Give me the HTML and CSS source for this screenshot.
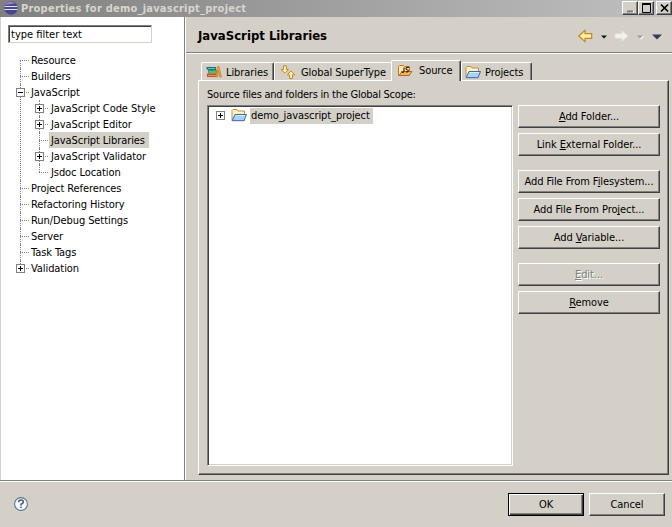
FILE: index.html
```html
<!DOCTYPE html>
<html lang="en">
<head>
<meta charset="utf-8">
<title>Properties for demo_javascript_project</title>
<link rel="stylesheet" href="styles.css">
</head>
<body>
<div class="dialog">
  <header class="titlebar">
    <svg class="logo" width="14" height="14" viewBox="0 0 14 14"><circle cx="7" cy="7" r="6.7" fill="#49458f"/><path d="M1 4Q3 .6 7 .4L11.500 2.500Z" fill="#8d89bd"/><path d="M.7 5.500h12.600M.5 8.500h13" stroke="#e5e3f3" stroke-width="1"/></svg>
    <h1 class="caption">Properties for demo_javascript_project</h1>
    <div class="controls">
      <span class="control"><svg width="13" height="11"><path d="M4 9h6" stroke="#fff" stroke-width="2"/><path d="M3 8.5h6" stroke="#777" stroke-width="2"/></svg></span>
      <span class="control"><svg width="13" height="11"><path d="M2.500 1v8.500h8V1" fill="none" stroke="#000"/><path d="M2 1h9" stroke="#000" stroke-width="2"/></svg></span>
      <span class="control close"><svg width="13" height="11"><path d="M3 1.500l7 7M10 1.500l-7 7" stroke="#000" stroke-width="1.700"/></svg></span>
    </div>
  </header>
  <div class="main">
    <nav class="side">
      <div class="filter">type filter text</div>
      <ul class="tree">
        <li><span class="label">Resource</span></li>
        <li><span class="label">Builders</span></li>
        <li><i class="box minus"></i><span class="label">JavaScript</span>
          <ul>
            <li><i class="box plus"></i><span class="label">JavaScript Code Style</span></li>
            <li><i class="box plus"></i><span class="label">JavaScript Editor</span></li>
            <li><span class="label selected">JavaScript Libraries</span></li>
            <li><i class="box plus"></i><span class="label">JavaScript Validator</span></li>
            <li><span class="label">Jsdoc Location</span></li>
          </ul>
        </li>
        <li><span class="label">Project References</span></li>
        <li><span class="label">Refactoring History</span></li>
        <li><span class="label">Run/Debug Settings</span></li>
        <li><span class="label">Server</span></li>
        <li><span class="label">Task Tags</span></li>
        <li><i class="box plus"></i><span class="label">Validation</span></li>
      </ul>
    </nav>
    <section class="page">
      <div class="heading">
        <h2>JavaScript Libraries</h2>
        <svg class="history" width="86" height="16" viewBox="0 0 86 16">
          <path d="M1.800 8L8 2.300v3.400h6.700v4.600H8v3.400Z" fill="#fff0a8" stroke="#c08a20" stroke-width="1.200"/>
          <path d="M24 7.500h6l-3 3Z" fill="#111"/>
          <path d="M51 8l-6-5.200v3H38v4.400h7v3Z" fill="#f3f2ec" stroke="#e3e0d7"/>
          <path d="M61 8h6l-3 3.500Z" fill="#fff"/><path d="M60 7.500h6l-3 3Z" fill="#9b9994"/>
          <path d="M75 6.500h10l-5 5Z" fill="#383b50"/>
        </svg>
      </div>
      <div class="tabs">
        <div class="tab libraries">
          <svg width="16" height="16" viewBox="0 0 16 16"><path d="M0 2.500L2 2h8v3H1.500Z" fill="#087a83"/><path d="M2 5h9v3.500H2Z" fill="#3a9f62"/><path d="M1 8.500h10.500V12H1Z" fill="#c84f24"/><path d="M2 3.500h7M3 7h7M2 10.500h8" stroke="#a9d9b5" stroke-width=".7"/><path d="M9.500 12L11.500 1.500h1.500L15.500 12h-2L12 6l-1 6Z" fill="#e8a52c" stroke="#b66c10" stroke-width=".5"/></svg>
          <span>Libraries</span></div>
        <div class="tab global">
          <svg width="16" height="16" viewBox="0 0 16 16"><path d="M3.500.8h3v3.700h2L5 8.300 1.200 4.500h2.300Z" fill="#fff0ae" stroke="#c08b2d"/><path d="M9.500 13.500h3v-3.700h2.300L11 5.800 7.300 9.800h2.200Z" fill="#fff0ae" stroke="#c08b2d"/></svg>
          <span>Global SuperType</span></div>
        <div class="tab source active">
          <svg width="16" height="16" viewBox="0 0 16 16"><path d="M1.500 12.500V3.500l1-1h4l1 1h5v9Z" fill="#ffe9a5" stroke="#bd7625"/><path d="M2 12.500l3-4h10l-3 4Z" fill="#f5b35d" stroke="#b76a22"/><path d="M7 4.500v4q-1 2-2.500 0M12 4.500q-3-.5-3 1t2 1.500q1 2-2 2" fill="none" stroke="#332018" stroke-width="1.200"/></svg>
          <span>Source</span></div>
        <div class="tab projects">
          <svg width="16" height="16" viewBox="0 0 16 16"><use href="#folder"/></svg>
          <span>Projects</span></div>
      </div>
      <div class="panel">
        <p class="hint">Source files and folders in the Global Scope:</p>
        <div class="content">
          <div class="list">
            <i class="box plus"></i>
            <svg width="16" height="16" viewBox="0 0 16 16"><g id="folder"><path d="M1 12.500V2.500l1-1h4l1 1.500h6.500v9.500Z" fill="#fff1c0" stroke="#bd9148"/><path d="M1.200 12.700L4 6.500h11.500l-2.500 6.200Z" fill="#a9d2fa" stroke="#3a6ba8"/><path d="M4.800 7.500h9" stroke="#dceeff"/></g></svg>
            <span class="item">demo_javascript_project</span>
          </div>
          <div class="actions">
            <button><span><u>A</u>dd Folder...</span></button>
            <button class="gap"><span>Link <u>E</u>xternal Folder...</span></button>
            <button><span>Add File From F<u>i</u>lesystem...</span></button>
            <button><span>Add File From Pro<u>j</u>ect...</span></button>
            <button class="gap"><span>Add <u>V</u>ariable...</span></button>
            <button disabled><span><u>E</u>dit...</span></button>
            <button><span><u>R</u>emove</span></button>
          </div>
        </div>
      </div>
    </section>
  </div>
  <footer class="footer">
    <svg class="help" width="16" height="16" viewBox="0 0 16 16"><circle cx="8" cy="8" r="6.400" fill="#f7fafc" stroke="#5e7391" stroke-width="1.100"/><path d="M5.700 6.300q0-2.200 2.300-2.200t2.300 1.900Q10.300 7.300 8 8.200v1.300M8 10.500v1.500" fill="none" stroke="#3f5878" stroke-width="1.500"/></svg>
    <button class="ok"><span>OK</span></button>
    <button class="cancel"><span>Cancel</span></button>
  </footer>
</div>
</body>
</html>
```
FILE: styles.css
```css
* { box-sizing: border-box; }
body {
  margin: 0;
  background: #d4d0c8;
  color: #000;
  font: 11px/16px "DejaVu Sans Condensed", "DejaVu Sans", sans-serif;
  font-stretch: condensed;
  letter-spacing: -0.08px;
}
ul, p, h1, h2 { margin: 0; padding: 0; }
svg { display: block; flex: none; }
.dialog { width: 672px; height: 527px; display: flex; flex-direction: column; overflow: hidden; }
.titlebar {
  height: 17px;
  flex: none;
  display: flex;
  align-items: center;
  padding: 0 0 1px 4px;
  background: linear-gradient(90deg, #808080, #c0c0c0);
}
.caption { margin-left: 3px; flex: 1; color: #d8d5ce; font-size: 11px; line-height: 15px; letter-spacing: 0.23px; white-space: nowrap; }
.controls { display: flex; }
.control {
  width: 16px;
  height: 14px;
  padding: 1px;
  background: #d4d0c8;
  border: 1px solid;
  border-color: #fff #404040 #404040 #fff;
  box-shadow: inset -1px -1px #808080;
}
.close { margin-left: 2px; }
.main { height: 465px; flex: none; display: flex; border-bottom: 1px solid #fff; box-shadow: inset 0 -1px #808080; padding-bottom: 1px; }
.side { width: 186px; flex: none; background: #fff; border-left: 1px solid #d4d0c8; border-right: 1px solid #fff; box-shadow: inset -1px 0 #808080; padding: 8px 0 0 7px; }
.filter {
  width: 144px;
  height: 18px;
  padding: 1px 0 0 2px;
  border: 1px solid;
  border-color: #808080 #d4d0c8 #d4d0c8 #808080;
  box-shadow: inset 1px 1px #404040;
  line-height: 16px;
  letter-spacing: 0;
}
.tree { margin: 9px 0 0 12px; list-style: none; }
.tree ul { margin-left: 19px; list-style: none; }
.tree li { position: relative; white-space: nowrap; }
.tree li::before { content: ""; position: absolute; left: 0; top: 0; bottom: 0; border-left: 1px dotted #808080; }
.tree li:last-child::before { bottom: auto; height: 8px; }
.tree > li:first-child::before { top: 8px; }
.tree li::after { content: ""; position: absolute; left: 0; top: 8px; width: 9px; border-top: 1px dotted #808080; }
.label { display: inline-block; height: 16px; margin-left: 9px; padding: 0 2px; line-height: 18px; vertical-align: top; }
.tree ul .label { margin-left: 10px; }
.selected { background: #d4d0c8; width: 100px; }
.box { width: 9px; height: 9px; flex: none; border: 1px solid #808080; background: linear-gradient(#000, #000) 1px 3px / 5px 1px no-repeat #fff; }
.plus { background: linear-gradient(#000, #000) 1px 3px / 5px 1px no-repeat, linear-gradient(#000, #000) 3px 1px / 1px 5px no-repeat, #fff; }
.tree .box { position: absolute; left: -4px; top: 4px; z-index: 1; }
.page { flex: 1; display: flex; flex-direction: column; }
.heading { height: 37px; flex: none; display: flex; align-items: center; justify-content: space-between; padding: 1px 9px 0 12px; border-bottom: 1px solid #fff; box-shadow: inset 0 -1px #808080; }
h2 { font-size: 13px; letter-spacing: 0; line-height: 18px; padding-top: 1px; }
.tabs { display: flex; align-items: flex-end; height: 26px; flex: none; padding-left: 15px; }
.tab { height: 18px; display: flex; align-items: center; padding: 2px 0 0 4px; white-space: nowrap; border: solid; border-width: 1px 1px 0; border-color: #fff #404040 #fff #fff; border-radius: 2px 2px 0 0; box-shadow: inset -1px 0 #808080; }
.tab span { margin-left: 4px; }
.libraries { width: 73px; }
.global { width: 117px; padding-left: 5px; border-right: 0; box-shadow: none; }
.global span { margin-left: 5px; }
.source { width: 70px; }
.projects { width: 71px; padding-left: 3px; }
.active { height: 21px; margin-bottom: -1px; padding: 0 0 1px 5px; position: relative; background: #d4d0c8; }
.active span { margin-left: 6px; }
.panel { width: 471px; height: 395px; margin-left: 12px; padding: 5px 6px 0 8px; border: 1px solid; border-color: #fff #404040 #404040 #fff; box-shadow: inset -1px -1px #808080; }
.hint { height: 19px; line-height: 17px; letter-spacing: -0.23px; }
.content { display: flex; gap: 5px; }
.list { width: 306px; height: 361px; display: flex; align-items: flex-start; padding: 2px 0 0 7px; background: #fff; border: 1px solid; border-color: #808080 #fff #fff #808080; box-shadow: inset 1px 1px #404040, inset -1px -1px #d4d0c8; }
.list .box { margin: 3px 6px 0 1px; }
.item { margin-left: 3px; width: 123px; height: 16px; padding-left: 1px; line-height: 16px; background: #d4d0c8; }
.actions { display: flex; flex-direction: column; gap: 5px; }
button { width: 142px; height: 23px; padding: 0; border: 1px solid; border-color: #fff #404040 #404040 #fff; border-radius: 0; box-shadow: inset -1px -1px #808080; background: #d4d0c8; color: #000; font: inherit; letter-spacing: inherit; }
u { text-decoration: underline; text-decoration-thickness: 1px; text-underline-offset: 1px; text-decoration-skip-ink: none; }
.gap { margin-bottom: 9px; }
button:disabled { color: #808080; text-shadow: 1px 1px #fff; }
.footer { flex: 1; display: flex; padding: 11px 7px 0 13px; }
.help { margin-top: 3px; margin-right: auto; }
.footer button { width: 76px; }
.footer .ok { margin-right: 5px; border-color: #000; box-shadow: inset 1px 1px #fff, inset -1px -1px #404040, inset -2px -2px #808080; }
```
